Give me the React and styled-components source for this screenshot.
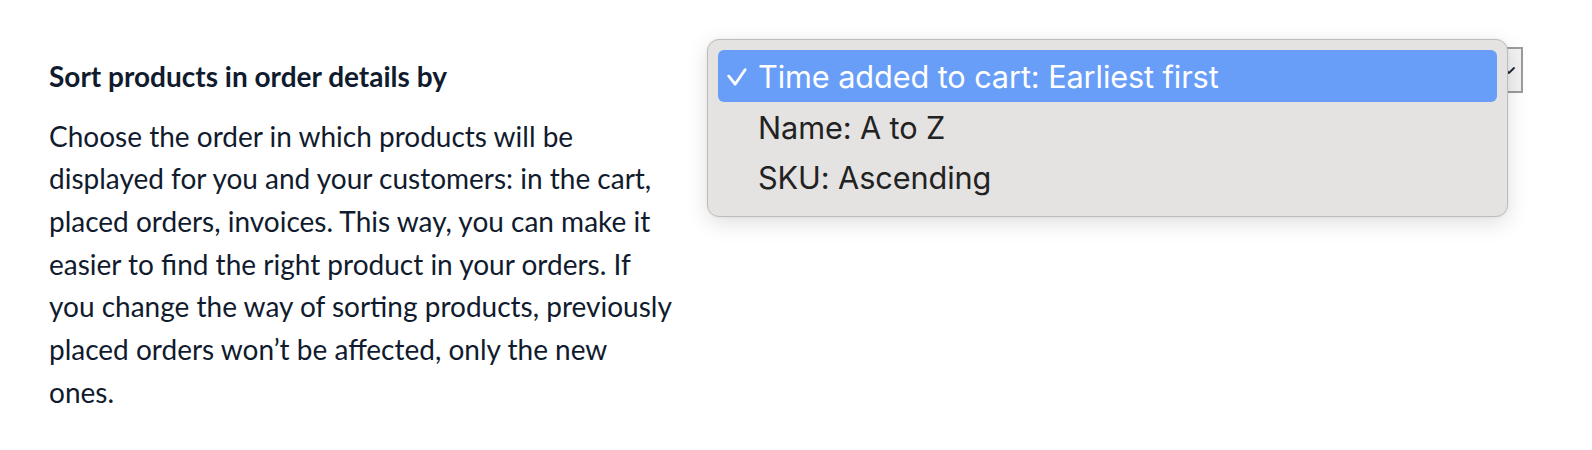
import styled, { createGlobalStyle } from "styled-components";

const GlobalStyle = createGlobalStyle`
  body {
    margin: 0;
    background: #fff;
  }
`;

const options = [
  "Time added to cart: Earliest first",
  "Name: A to Z",
  "SKU: Ascending",
];

const App = () => {
  const selected = 0;

  return (
    <>
      <GlobalStyle />
      <Page>
        <Info>
          <Title>Sort products in order details by</Title>
          <Text>
            Choose the order in which products will be displayed for you and
            your customers: in the cart, placed orders, invoices. This way, you
            can make it easier to find the right product in your orders. If you
            change the way of sorting products, previously placed orders won’t
            be affected, only the new ones.
          </Text>
        </Info>

        <Control>
          <Select>
            <Chevron viewBox="0 0 16 16">
              <path d="M3 6l5 5 5-5" />
            </Chevron>
          </Select>

          <Popup>
            {options.map((opt, index) => (
              <Option key={index} active={index === selected}>
                <Check>
                  {index === selected && (
                    <svg viewBox="0 0 20 18">
                      <path d="M1.8 8.2l6.3 8 10-14.5" />
                    </svg>
                  )}
                </Check>
                {opt}
              </Option>
            ))}
          </Popup>
        </Control>
      </Page>
    </>
  );
};

export default App;

const Page = styled.div`
  display: flex;
  align-items: flex-start;
  padding: 47px 69px 0 49px;
  height: 403px;
`;

const Info = styled.div`
  width: 624px;
  padding-top: 8px;
  font-family: Lato, "Noto Sans", sans-serif;
  color: #111b2e;
`;

const Title = styled.div`
  font-size: 28px;
  font-weight: 700;
  line-height: 42.67px;
  margin-bottom: 17px;
`;

const Text = styled.p`
  margin: 0;
  font-size: 28px;
  line-height: 42.67px;
`;

const Control = styled.div`
  position: relative;
  flex: 1;
  margin-left: 39px;
`;

const Select = styled.div`
  height: 46px;
  box-sizing: border-box;
  border: 2px solid #9c9c9c;
  background: #f2f2f2;
  display: flex;
  align-items: center;
  justify-content: flex-end;
  padding-right: 4px;
`;

const Chevron = styled.svg`
  width: 16px;
  height: 16px;
  fill: none;
  stroke: #1c2433;
  stroke-width: 1.8;
  stroke-linecap: round;
`;

const Popup = styled.div`
  position: absolute;
  top: -8px;
  left: -5px;
  width: 801px;
  box-sizing: border-box;
  padding: 10px 10px 14px 10px;
  background: #e4e3e2;
  border: 1px solid #bdbcbb;
  border-radius: 12px;
  box-shadow: 0 6px 22px rgba(0, 0, 0, 0.13), 0 0 3px rgba(0, 0, 0, 0.06);
  font-family: Inter, "Noto Sans", sans-serif;
`;

const Option = styled.div`
  display: flex;
  align-items: center;
  height: ${props => (props.active ? "52px" : "50px")};
  padding-left: 9px;
  border-radius: 6px;
  font-size: 30.7px;
  letter-spacing: -0.1px;
  color: ${props => (props.active ? "#ffffff" : "#222222")};
  background: ${props => (props.active ? "#689ef8" : "transparent")};
`;

const Check = styled.span`
  display: flex;
  align-items: center;
  width: 29px;
  margin-right: 2px;
  padding-top: 2px;

  svg {
    fill: none;
    stroke: currentColor;
    stroke-width: 2.8;
    stroke-linecap: round;
    stroke-linejoin: round;
    width: 20px;
    height: 18px;
  }
`;
